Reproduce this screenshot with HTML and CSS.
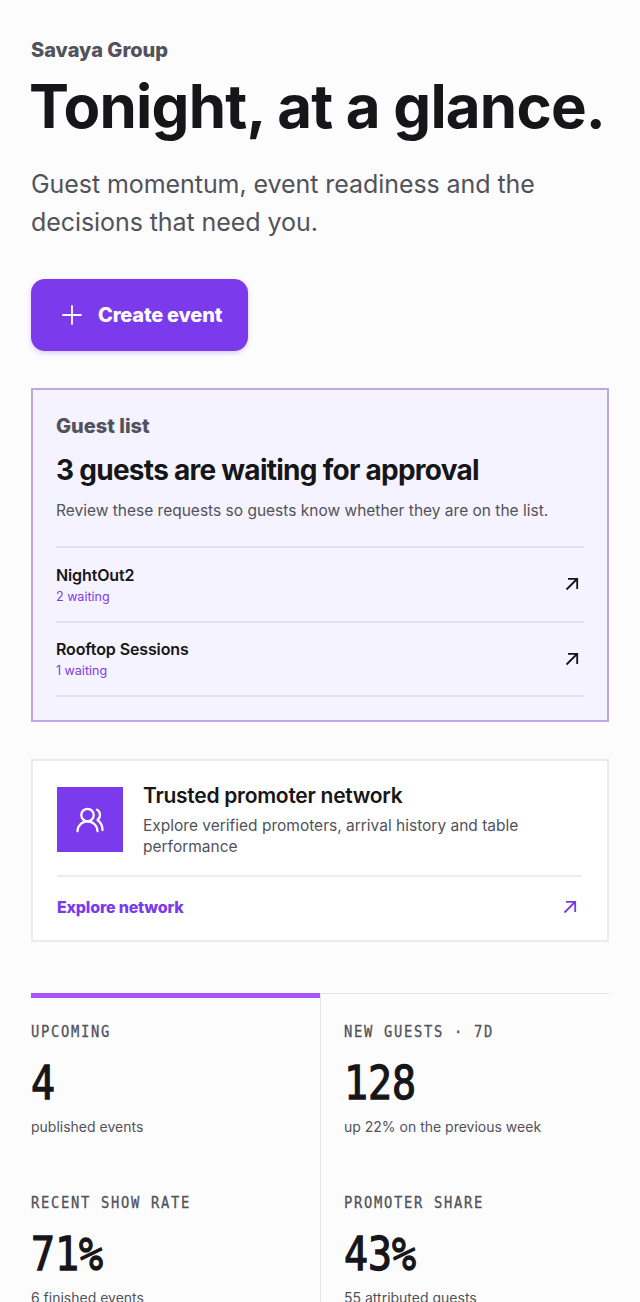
FILE: index.html
```html
<!DOCTYPE html>
<html lang="en">
<head>
    <meta charset="UTF-8">
    <meta name="viewport" content="width=device-width, initial-scale=1.0">
    <title>Tonight, at a glance</title>
    <link rel="stylesheet" href="styles.css">
</head>
<body>
    <main class="page">
        <header class="hero">
            <p class="org">Savaya Group</p>
            <h1 class="hero-title">Tonight, at a glance.</h1>
            <p class="hero-sub">Guest momentum, event readiness and the decisions that need you.</p>
            <a class="btn-create" href="#">
                <svg class="btn-icon" viewBox="0 0 20 20" fill="none" stroke="currentColor" stroke-width="1.8" stroke-linecap="round"><path d="M10 1v18M1 10h18"/></svg>
                <span>Create event</span>
            </a>
        </header>

        <section class="guest-card">
            <p class="guest-label">Guest list</p>
            <h2 class="guest-title">3 guests are waiting for approval</h2>
            <p class="guest-text">Review these requests so guests know whether they are on the list.</p>
            <ul class="guest-rows">
                <li class="guest-row">
                    <div class="row-text">
                        <div class="row-name">NightOut2</div>
                        <div class="row-count">2 waiting</div>
                    </div>
                    <svg class="arrow" viewBox="0 0 14 14" fill="none" stroke="currentColor" stroke-width="1.8"><path d="M1.500 12.500 12 2M3 1.800h9.200V12"/></svg>
                </li>
                <li class="guest-row">
                    <div class="row-text">
                        <div class="row-name">Rooftop Sessions</div>
                        <div class="row-count">1 waiting</div>
                    </div>
                    <svg class="arrow" viewBox="0 0 14 14" fill="none" stroke="currentColor" stroke-width="1.8"><path d="M1.500 12.500 12 2M3 1.800h9.200V12"/></svg>
                </li>
            </ul>
        </section>

        <section class="network-card">
            <div class="network-top">
                <div class="network-icon">
                    <svg viewBox="0 0 24 24" fill="none" stroke="currentColor" stroke-width="1.8" stroke-linecap="round" stroke-linejoin="round"><path d="M18 21a8 8 0 0 0-16 0"/><circle cx="10" cy="8" r="5"/><path d="M22 20c0-3.370-2-6.500-4-8a5 5 0 0 0-.45-8.300"/></svg>
                </div>
                <div>
                    <h2 class="network-title">Trusted promoter network</h2>
                    <p class="network-text">Explore verified promoters, arrival history and table performance</p>
                </div>
            </div>
            <a class="network-link" href="#">
                <span>Explore network</span>
                <svg class="arrow" viewBox="0 0 14 14" fill="none" stroke="currentColor" stroke-width="1.8"><path d="M1.500 12.500 12 2M3 1.800h9.200V12"/></svg>
            </a>
        </section>

        <section class="stats">
            <div class="stat stat-active">
                <div class="stat-label">UPCOMING</div>
                <div class="stat-value">4</div>
                <div class="stat-note">published events</div>
            </div>
            <div class="stat">
                <div class="stat-label">NEW GUESTS · 7D</div>
                <div class="stat-value">128</div>
                <div class="stat-note">up 22% on the previous week</div>
            </div>
            <div class="stat">
                <div class="stat-label">RECENT SHOW RATE</div>
                <div class="stat-value">71%</div>
                <div class="stat-note">6 finished events</div>
            </div>
            <div class="stat">
                <div class="stat-label">PROMOTER SHARE</div>
                <div class="stat-value">43%</div>
                <div class="stat-note">55 attributed guests</div>
            </div>
        </section>
    </main>
</body>
</html>
```

FILE: styles.css
```css
body {
    font-family: Inter, 'Noto Sans', sans-serif;
    background-color: #fcfcfd;
    color: #161618;
    margin: 0;
}

h1, h2, p, ul {
    margin: 0;
    padding: 0;
}

.page {
    padding: 38px 31px 0;
}

.org {
    font-size: 20px;
    line-height: 24px;
    font-weight: 800;
    color: #52525b;
}

.hero-title {
    font-size: 60px;
    line-height: 72px;
    font-weight: 700;
    letter-spacing: -0.8px;
    white-space: nowrap;
    margin: 8px 0 0 -2px;
}

.hero-sub {
    font-size: 25px;
    line-height: 38px;
    letter-spacing: -0.07px;
    color: #52525b;
    margin-top: 23px;
}

.btn-create {
    display: inline-flex;
    align-items: center;
    gap: 16px;
    height: 72px;
    padding: 0 26px 0 31px;
    margin-top: 38px;
    box-sizing: border-box;
    border-radius: 14px;
    background-color: #7c3aed;
    color: #fff;
    font-size: 20px;
    font-weight: 800;
    letter-spacing: -0.2px;
    text-decoration: none;
    box-shadow: 0 2px 5px rgba(124, 58, 237, 0.25);
}

.btn-icon {
    width: 20px;
    height: 20px;
}

.guest-card {
    margin-top: 37px;
    padding: 23px;
    border: 2px solid #bca8e6;
    background-color: #f5f3ff;
}

.guest-label {
    font-size: 20px;
    line-height: 26px;
    font-weight: 800;
    color: #52525b;
}

.guest-title {
    font-size: 28px;
    line-height: 36px;
    font-weight: 700;
    letter-spacing: -0.73px;
    margin-top: 13px;
}

.guest-text {
    font-size: 15.5px;
    line-height: 24px;
    color: #52525b;
    margin-top: 11px;
}

.guest-rows {
    list-style: none;
    margin-top: 23px;
    border-top: 2px solid #e3dfec;
}

.guest-row {
    display: flex;
    justify-content: space-between;
    align-items: center;
    height: 72.5px;
    padding-right: 5px;
    border-bottom: 2px solid #e3dfec;
}

.row-text {
    padding-top: 2px;
}

.row-name {
    font-size: 16px;
    line-height: 22px;
    font-weight: 600;
    letter-spacing: -0.12px;
}

.row-count {
    font-size: 12.5px;
    line-height: 21px;
    color: #7c3aed;
}

.arrow {
    width: 14px;
    height: 14px;
}

.network-card {
    margin-top: 37px;
    padding: 26px 25px 3px 24px;
    border: 2px solid #ececef;
    background-color: #fff;
}

.network-top {
    display: flex;
    gap: 20px;
    padding-bottom: 18px;
    border-bottom: 2px solid #ececef;
}

.network-icon {
    flex: none;
    display: flex;
    align-items: center;
    justify-content: center;
    width: 66px;
    height: 65px;
    background-color: #7c3aed;
    color: #fff;
}

.network-icon svg {
    width: 30px;
    height: 30px;
}

.network-title {
    font-size: 21px;
    line-height: 17px;
    font-weight: 600;
    letter-spacing: -0.27px;
}

.network-text {
    font-size: 15.5px;
    line-height: 21px;
    color: #52525b;
    margin-top: 11px;
}

.network-link {
    display: flex;
    justify-content: space-between;
    align-items: center;
    height: 60px;
    padding-right: 5px;
    color: #7c3aed;
    font-size: 16px;
    font-weight: 800;
    letter-spacing: -0.2px;
    text-decoration: none;
}

.stats {
    display: grid;
    grid-template-columns: 289px 1fr;
    margin-top: 51px;
    border-top: 1px solid #e4e4e7;
}

.stat {
    position: relative;
    height: 171px;
    box-sizing: border-box;
    padding-top: 29px;
}

.stat:nth-child(even) {
    padding-left: 23px;
    border-left: 1px solid #e4e4e7;
}

.stat-active::before {
    content: "";
    position: absolute;
    top: -1px;
    left: 0;
    right: 0;
    height: 5px;
    background-color: #a855f7;
}

/* the mono font is wider than the design's, so narrow it */
.stat-label {
    font-family: 'DejaVu Sans Mono', 'Liberation Mono', monospace;
    font-size: 15px;
    line-height: 18px;
    letter-spacing: 1.84px;
    color: #52525b;
    -webkit-text-stroke: 0.3px #52525b;
    transform: scaleX(0.92);
    transform-origin: left;
    white-space: nowrap;
}

.stat-value {
    font-family: 'DejaVu Sans Mono', 'Liberation Mono', monospace;
    font-size: 46px;
    line-height: 48px;
    margin-top: 18px;
    -webkit-text-stroke: 1.3px #161618;
    transform: scaleX(0.867);
    transform-origin: left;
}

.stat-note {
    font-size: 14px;
    line-height: 20px;
    color: #52525b;
    margin-top: 10px;
}
```
